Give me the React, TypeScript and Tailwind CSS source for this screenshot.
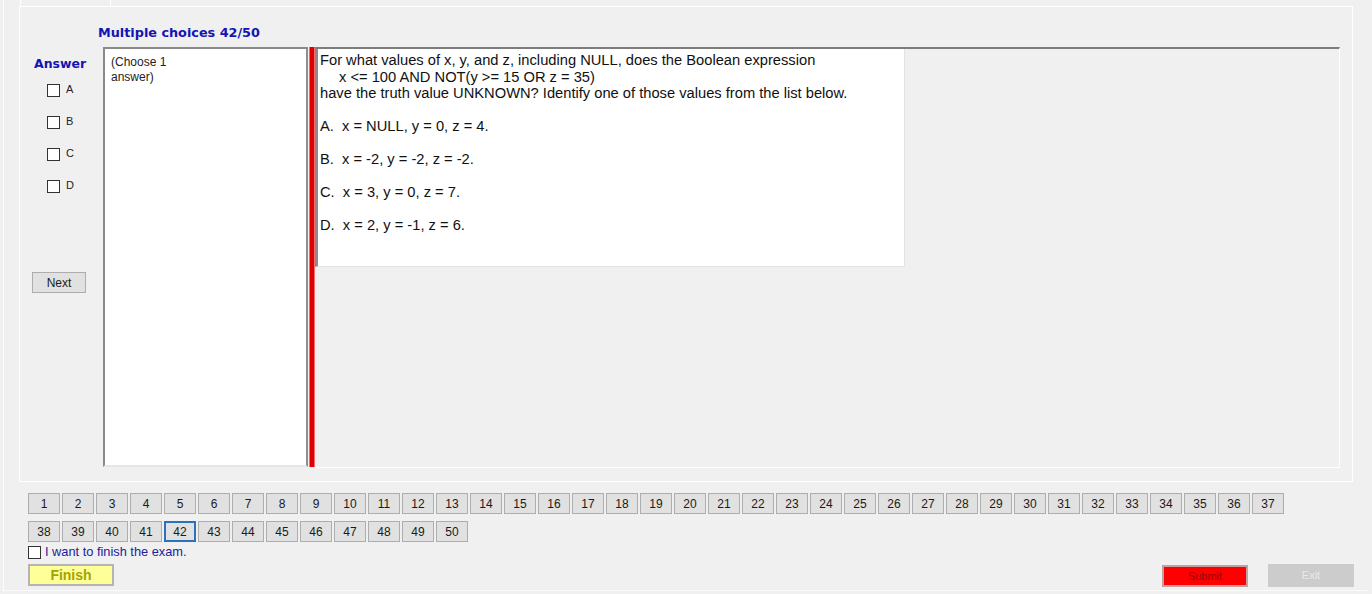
import React from "react";

const ROW1 = Array.from({ length: 37 }, (_, i) => i + 1);
const ROW2 = Array.from({ length: 13 }, (_, i) => i + 38);
const CHOICES = ["A", "B", "C", "D"];

function NumButton({ n, current }: { n: number; current: boolean }) {
  return (
    <button
      type="button"
      className={
        "w-[32px] h-[21px] bg-[#e1e1e1] text-[12px] leading-none text-[#1a1a1a] flex items-center justify-center " +
        (current ? "border-2 border-[#2a72c0]" : "border border-[#adadad]")
      }
    >
      {n}
    </button>
  );
}

function Box() {
  return <span className="w-[13px] h-[13px] border border-[#333333] bg-white shrink-0" />;
}

const heading = { fontFamily: '"DejaVu Sans", Verdana, sans-serif' };

export default function App() {
  const current = 42;
  return (
    <div
      className="w-[1372px] h-[594px] bg-[#f0f0f0] overflow-hidden text-black"
      style={{ fontFamily: '"Liberation Sans", Arial, sans-serif' }}
    >
      <div className="ml-[3px] w-[1364px] h-[591px] border-l border-b border-[#fbfbfb]">
        {/* tab strip */}
        <div className="h-[6px] flex">
          <div className="ml-[16px] w-[91px] h-full border-x border-white" />
        </div>

        {/* tab page frame */}
        <div className="ml-[15px] w-[1334px] h-[476px] border border-white">
          <div
            className="pl-[78px] pt-[18px] h-[40px] text-[12.8px] leading-[16px] font-bold text-[#1414b4]"
            style={heading}
          >
            Multiple choices 42/50
          </div>

          <div className="flex h-[420px]">
            {/* answer column */}
            <div className="w-[83px] flex flex-col">
              <div
                className="pl-[14px] mt-[9px] text-[12.5px] leading-[16px] font-bold text-[#1414b4]"
                style={heading}
              >
                Answer
              </div>
              <div className="mt-[12px] pl-[27px] flex flex-col gap-[19px]">
                {CHOICES.map((c) => (
                  <label key={c} className="flex items-center gap-[6px] h-[13px]">
                    <Box />
                    <span className="text-[11px] leading-none text-[#222] -mt-[2px]">{c}</span>
                  </label>
                ))}
              </div>
              <div className="mt-[79px] pl-[12px]">
                <button
                  type="button"
                  className="w-[54px] h-[21px] bg-[#e1e1e1] border border-[#adadad] text-[12px] leading-none text-[#1a1a1a] flex items-center justify-center"
                >
                  Next
                </button>
              </div>
            </div>

            {/* choose box */}
            <div className="w-[205px] h-[420px] bg-white border-2 border-t-[#8a8a8a] border-l-[#8a8a8a] border-r-[#8f8f8f] border-b-[#e6e6e6] px-[6px] pt-[6px] text-[12px] leading-[15px] text-[#222]">
              (Choose 1
              <br />
              answer)
            </div>

            {/* splitter */}
            <div className="ml-[1px] w-[6px] h-[420px] bg-[#e10000] border-x border-[#f07070]" />

            {/* question panel */}
            <div className="w-[1025px] h-[421px] border-t-2 border-t-[#7d7d7d] border-r border-b border-r-white border-b-white">
              <div className="w-[590px] h-[218px] bg-white border-l-[3px] border-l-[#8a8a8a] border-r border-b border-r-[#e3e3e3] border-b-[#e3e3e3] pl-[2px] pt-[3px] text-[14.7px] leading-[16.5px] text-[#111]">
                <div>For what values of x, y, and z, including NULL, does the Boolean expression</div>
                <div className="pl-[19px]">x &lt;= 100 AND NOT(y &gt;= 15 OR z = 35)</div>
                <div>have the truth value UNKNOWN? Identify one of those values from the list below.</div>
                <div className="h-[16.5px]" />
                <div className="whitespace-pre">A.  x = NULL, y = 0, z = 4.</div>
                <div className="h-[16.5px]" />
                <div className="whitespace-pre">B.  x = -2, y = -2, z = -2.</div>
                <div className="h-[16.5px]" />
                <div className="whitespace-pre">C.  x = 3, y = 0, z = 7.</div>
                <div className="h-[16.5px]" />
                <div className="whitespace-pre">D.  x = 2, y = -1, z = 6.</div>
              </div>
            </div>
          </div>
        </div>

        {/* navigation */}
        <div className="pl-[24px] mt-[11px] flex flex-col gap-[7px]">
          <div className="flex gap-[2px]">
            {ROW1.map((n) => (
              <NumButton key={n} n={n} current={n === current} />
            ))}
          </div>
          <div className="flex gap-[2px]">
            {ROW2.map((n) => (
              <NumButton key={n} n={n} current={n === current} />
            ))}
          </div>
        </div>

        <label className="pl-[24px] mt-[3px] flex items-center gap-[4px] h-[14px]">
          <Box />
          <span className="text-[12.8px] leading-none text-[#1c1c9c]">I want to finish the exam.</span>
        </label>

        <div className="pl-[24px] mt-[5px] flex items-start">
          <button
            type="button"
            className="w-[86px] h-[22px] bg-[#ffff99] border-2 border-[#b4b4b4] text-[14px] leading-none font-bold text-[#a3a300] flex items-center justify-center"
          >
            Finish
          </button>
          <button
            type="button"
            className="ml-[1048px] mt-[1px] w-[86px] h-[22px] bg-[#ff0000] border-2 border-[#c4a0a0] text-[11px] leading-none text-[#a00000] flex items-center justify-center"
          >
            Submit
          </button>
          <button
            type="button"
            className="ml-[20px] w-[86px] h-[23px] bg-[#cccccc] border border-[#cccccc] text-[11px] leading-none text-[#e8e8e8] flex items-center justify-center"
          >
            Exit
          </button>
        </div>
      </div>
    </div>
  );
}
